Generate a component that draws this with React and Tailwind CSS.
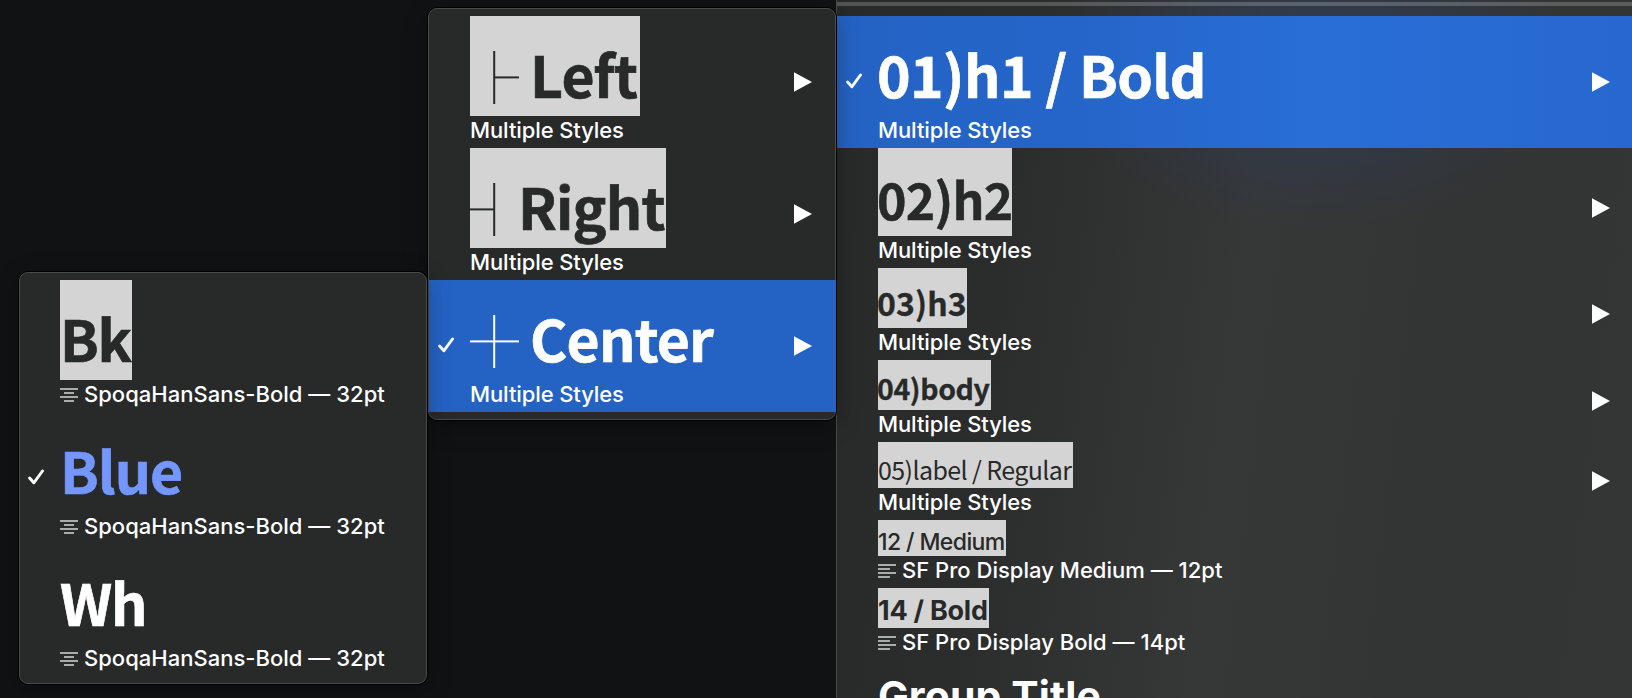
const HAN = "font-['Noto_Sans_CJK_KR',sans-serif]";
const UI = "font-['Inter',sans-serif]";

function Check() {
  return (
    <svg className="-mt-0.5 h-4 w-4 shrink-0" viewBox="0 0 16 16" fill="none" stroke="#fff" strokeWidth="2.9" strokeLinecap="round" strokeLinejoin="round">
      <path d="M1.6 9 L5.8 13.8 L14.5 2" />
    </svg>
  );
}

function Arrow() {
  return (
    <svg className="h-5 w-[18px] shrink-0" viewBox="0 0 18 20">
      <path d="M0 .2 L18 10 L0 19.8 Z" fill="#fff" />
    </svg>
  );
}

function AlignIcon({ center }) {
  return (
    <svg className="mr-1.5 h-4 w-[18px] shrink-0" viewBox="0 0 18 16" stroke="#aaabab" strokeWidth="2">
      <path d={center ? "M0 1H18M4 5H14M0 9H18M4 13H14" : "M0 1H18M0 5H12M0 9H18M0 13H12"} />
    </svg>
  );
}

function Stem({ left, right }) {
  return (
    <svg className="mt-[35px] h-[54px] w-[49px] shrink-0" viewBox="0 0 49 54" fill="none" stroke="currentColor" strokeWidth="2">
      <path d="M24.2 0V53" />
      {left && <path d="M0 26.4H24" />}
      {right && <path d="M24 26.4H49" />}
    </svg>
  );
}

function Row({ title, titleClass, boxClass, stem, sub = "Multiple Styles", align, checked, arrow, plain, rowClass = "" }) {
  return (
    <div className={`flex shrink-0 items-center ${rowClass}`}>
      <div className="flex w-[41px] shrink-0 pl-[9px]">{checked && <Check />}</div>
      <div className="min-w-0 flex-1 self-start">
        <div className={`flex items-start whitespace-pre ${boxClass} ${plain ? "text-white" : "bg-[#d4d4d4] text-[#282929]"}`}>
          {stem}
          <span className={`block ${titleClass}`}>{title}</span>
        </div>
        {sub && (
          <div className={`flex h-8 items-start whitespace-nowrap text-white ${UI} text-[22px] font-medium leading-[29px]`}>
            {align && <span className="flex pt-2"><AlignIcon center={align === "center"} /></span>}
            <span className={align ? "tracking-[0.02px]" : "tracking-[-0.1px]"}>{sub}</span>
          </div>
        )}
      </div>
      {arrow && <div className="pr-[22px]"><Arrow /></div>}
    </div>
  );
}

const BIG = `${HAN} text-[57px] font-bold leading-[114px] [-webkit-text-stroke:0.7px_currentColor]`;

function ColorMenu() {
  const sub = "SpoqaHanSans-Bold — 32pt";
  return (
    <div className="relative z-20 mr-px mt-[272px] h-[412px] w-[408px] rounded-[9px] border border-[#4b4b4b] bg-[#282929] py-[7px] shadow-[0_0_0_1px_#000,0_6px_24px_rgba(0,0,0,0.3)]">
      <Row rowClass="-ml-px h-[132px]" title="Bk" titleClass={`${BIG} tracking-[-1.2px]`} boxClass="h-[100px] w-[72px]" sub={sub} align="center" />
      <Row rowClass="-ml-px h-[132px]" title="Blue" titleClass={`${BIG} tracking-[-1px] text-[#7496ff]`} boxClass="h-[100px] w-[200px]" plain checked sub={sub} align="center" />
      <Row rowClass="-ml-px h-[132px]" title="Wh" titleClass={`${BIG} tracking-[-1.2px]`} boxClass="h-[100px] w-[200px]" plain sub={sub} align="center" />
    </div>
  );
}

function AlignMenu() {
  return (
    <div className="relative z-10 mt-2 h-[412px] w-[408px] rounded-[9px] border border-[#4b4b4b] bg-[#282929] py-[7px] shadow-[0_0_0_1px_#000,0_6px_24px_rgba(0,0,0,0.3)]">
      <Row rowClass="pr-px h-[132px]" stem={<Stem right />} title="Left" titleClass={`${BIG} pl-[11px] tracking-[-0.7px]`} boxClass="h-[100px] w-[170px]" arrow />
      <Row rowClass="pr-px h-[132px]" stem={<Stem left />} title="Right" titleClass={`${BIG} -ml-px tracking-[-0.8px]`} boxClass="h-[100px] w-[196px]" arrow />
      <Row rowClass="-mr-px h-[132px] pr-0.5 bg-[#2463c4]" stem={<Stem left right />} title="Center" titleClass={`${BIG} pl-[11px] tracking-[-0.8px]`} boxClass="h-[100px] w-[260px]" plain checked arrow />
    </div>
  );
}

function StyleMenu() {
  return (
    <div className="flex h-[698px] flex-1 flex-col overflow-hidden border-l border-[#4b4b4b] bg-[radial-gradient(ellipse_260px_170px_at_480px_60px,rgba(44,62,92,0.75),transparent),linear-gradient(97deg,#282929_0%,#2b2c2c_22%,#363737_50%,#333434_75%,#343535_100%)]">
      <div className="mb-2.5 mt-0.5 h-1 shrink-0 bg-white/20" />
      <Row rowClass="h-[132px] bg-[linear-gradient(90deg,#2463c4_0%,#2565c9_30%,#286ed6_60%,#2768d0_100%)]" title="01)h1 / Bold" titleClass={`${BIG} -ml-px tracking-[-0.6px]`} boxClass="h-[100px] w-[400px]" plain checked arrow />
      <Row rowClass="h-[120px]" title="02)h2" titleClass={`${HAN} -ml-px text-[50px] font-bold leading-[101px] tracking-[-0.8px] [-webkit-text-stroke:0.5px_currentColor]`} boxClass="h-[88px] w-[134px]" arrow />
      <Row rowClass="h-[92px]" title="03)h3" titleClass={`${HAN} -ml-px text-[32px] font-bold leading-[68px] tracking-[0.1px] [-webkit-text-stroke:0.3px_currentColor]`} boxClass="h-[60px] w-[89px]" arrow />
      <Row rowClass="h-[82px]" title="04)body" titleClass={`${HAN} -ml-px text-[28.5px] font-bold leading-[56px] tracking-[-0.4px] [-webkit-text-stroke:0.3px_currentColor]`} boxClass="h-[50px] w-[113px]" arrow />
      <Row rowClass="h-[78px]" title="05)label / Regular" titleClass={`${HAN} text-[25px] font-normal leading-[55px] tracking-[-0.6px]`} boxClass="h-[46px] w-[195px]" arrow />
      <Row rowClass="h-[68px]" title="12 / Medium" titleClass={`${UI} text-[23px] font-medium leading-[44px] tracking-[-0.6px]`} boxClass="h-[36px] w-[128px]" align="left" sub="SF Pro Display Medium — 12pt" />
      <Row rowClass="h-[72px]" title="14 / Bold" titleClass={`${UI} text-[27px] font-bold leading-[45px] tracking-[-0.25px]`} boxClass="h-[40px] w-[111px]" align="left" sub="SF Pro Display Bold — 14pt" />
      <Row rowClass="h-[100px]" title="Group Title" titleClass={`${UI} text-[41px] font-bold leading-[72px] tracking-[0.1px]`} boxClass="h-[68px] w-[300px]" plain sub="" />
    </div>
  );
}

export default function App() {
  return (
    <div className="flex h-[698px] w-[1632px] items-start overflow-hidden bg-[#111214] pl-[19px]">
      <ColorMenu />
      <AlignMenu />
      <StyleMenu />
    </div>
  );
}
